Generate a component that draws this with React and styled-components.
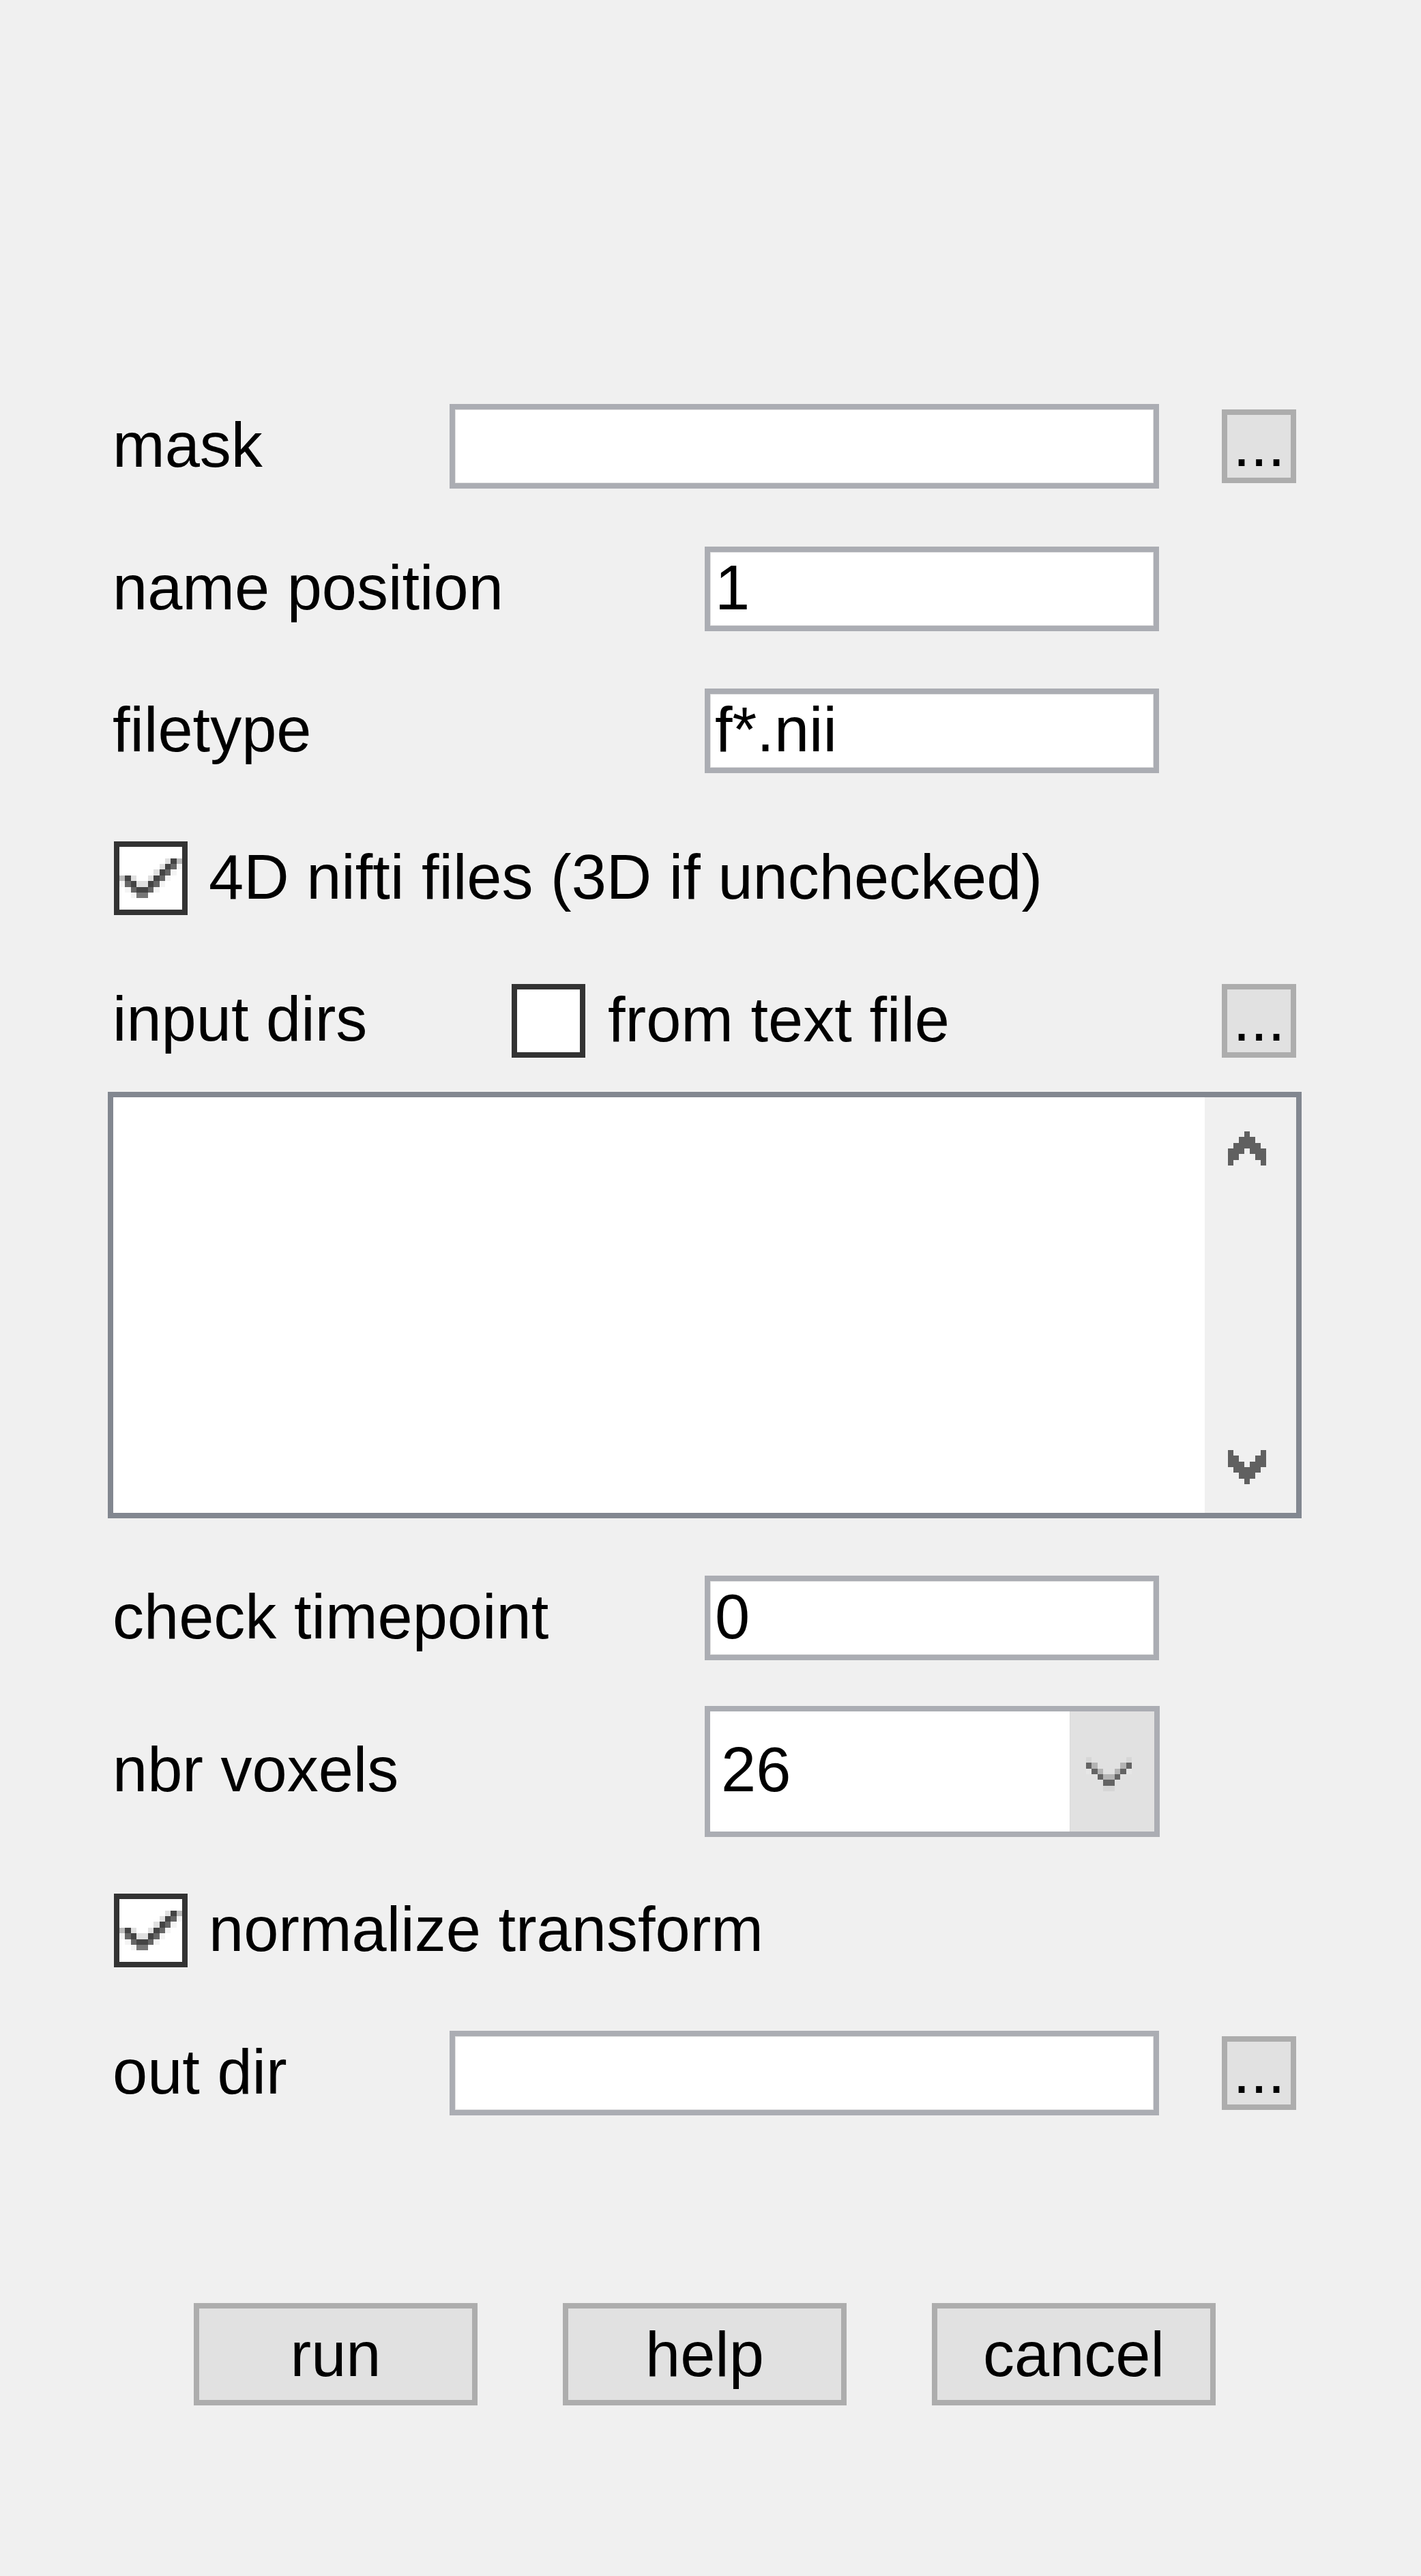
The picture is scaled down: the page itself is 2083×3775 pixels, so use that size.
import React from 'react';
import styled, { createGlobalStyle } from 'styled-components';

const Global = createGlobalStyle`
  html, body {
    margin: 0;
    padding: 0;
    background: #f0f0f0;
  }
  body {
    font-family: "Liberation Sans", Arial, sans-serif;
  }
`;

const Page = styled.div`
  width: 2083px;
  min-height: 3775px;
  box-sizing: border-box;
  padding: 592px 0 0 165px;
  background: #f0f0f0;
  font-family: "Liberation Sans", Arial, sans-serif;
  font-size: 92px;
  line-height: 92px;
  color: #000;
`;

const Form = styled.div`
  width: 1735px;
  display: flex;
  flex-direction: column;
`;

const Row = styled.div`
  display: flex;
  align-items: flex-start;
  margin-top: ${(p) => p.$top || 0}px;
  margin-left: ${(p) => p.$left || 0}px;
  gap: ${(p) => p.$gap || 0}px;
`;

const Label = styled.div`
  flex: none;
  width: ${(p) => (p.$w ? `${p.$w}px` : 'auto')};
  margin-top: ${(p) => p.$offset ?? 14}px;
  margin-left: ${(p) => p.$left || 0}px;
  white-space: nowrap;
`;

const Field = styled.div`
  flex: none;
  box-sizing: border-box;
  width: ${(p) => p.$w}px;
  height: 124px;
  border: 8px solid #abadb3;
  background: #fff;
  box-shadow: inset 0 0 0 1px #e3e3e3;
  padding: 6px 0 0 7px;
  white-space: nowrap;
  overflow: hidden;
`;

const BrowseButton = styled.div`
  flex: none;
  box-sizing: border-box;
  width: 109px;
  height: 108px;
  margin-top: ${(p) => p.$top ?? 8}px;
  margin-left: ${(p) => (p.$auto ? 'auto' : '92px')};
  border: 8px solid #adadad;
  background: #e1e1e1;
  display: flex;
  justify-content: center;
  align-items: flex-start;
  line-height: 86px;
`;

const CheckBox = styled.div`
  flex: none;
  box-sizing: border-box;
  width: 108px;
  height: 108px;
  margin-left: ${(p) => p.$left || 0}px;
  border: 8px solid #333333;
  background: #fff;
  display: flex;
`;

const ListBox = styled.div`
  flex: none;
  box-sizing: border-box;
  width: 1750px;
  height: 625px;
  margin-left: -7px;
  border: 8px solid #828790;
  background: #fff;
  display: flex;
`;

const ListArea = styled.div`
  flex: 1;
  background: #fff;
`;

const ScrollBar = styled.div`
  flex: none;
  width: 134px;
  box-sizing: border-box;
  background: #f0f0f0;
  display: flex;
  flex-direction: column;
  justify-content: space-between;
  align-items: flex-start;
  padding: 50px 0 42px 34px;
`;

const Combo = styled.div`
  flex: none;
  box-sizing: border-box;
  width: 667px;
  height: 192px;
  border: 8px solid #abadb3;
  background: #fff;
  display: flex;
`;

const ComboText = styled.div`
  flex: 1;
  padding: 39px 0 0 16px;
`;

const ComboButton = styled.div`
  flex: none;
  width: 124px;
  box-sizing: border-box;
  background: #e1e1e1;
  border-left: 1px solid #d9d9d9;
  padding: 67px 0 0 23px;
`;

const ActionButton = styled.div`
  flex: none;
  box-sizing: border-box;
  width: 416px;
  height: 150px;
  border: 8px solid #adadad;
  background: #e1e1e1;
  display: flex;
  align-items: center;
  justify-content: center;
`;

const PixelSvg = styled.svg`
  display: block;
  shape-rendering: crispEdges;
`;

const CHECK = [
  [8, 2, '#e0e0e0'], [9, 2, '#444'], [10, 2, '#bbb'],
  [7, 3, '#e0e0e0'], [8, 3, '#444'], [9, 3, '#666'], [10, 3, '#f4f4f4'],
  [6, 4, '#e0e0e0'], [7, 4, '#444'], [8, 4, '#666'], [9, 4, '#f4f4f4'],
  [0, 5, '#bbb'], [1, 5, '#444'], [2, 5, '#e0e0e0'], [5, 5, '#e0e0e0'], [6, 5, '#444'], [7, 5, '#666'], [8, 5, '#f4f4f4'],
  [0, 6, '#f4f4f4'], [1, 6, '#666'], [2, 6, '#444'], [3, 6, '#e0e0e0'], [4, 6, '#e0e0e0'], [5, 6, '#444'], [6, 6, '#666'], [7, 6, '#f4f4f4'],
  [1, 7, '#f4f4f4'], [2, 7, '#666'], [3, 7, '#444'], [4, 7, '#444'], [5, 7, '#666'], [6, 7, '#f4f4f4'],
  [2, 8, '#f4f4f4'], [3, 8, '#777'], [4, 8, '#777'],
];

const UP = [[3], [2, 3, 4], [1, 2, 3, 4, 5], [0, 1, 2, 4, 5, 6], [0, 1, 5, 6], [0, 6]];
const DOWN = [...UP].reverse();

const CHEVRON = [
  [0, 0, '#d6d6d6'], [7, 0, '#d6d6d6'],
  [0, 1, '#646464'], [1, 1, '#b4b4b4'], [6, 1, '#b4b4b4'], [7, 1, '#646464'],
  [0, 2, '#e6e6e6'], [1, 2, '#646464'], [2, 2, '#b4b4b4'], [5, 2, '#b4b4b4'], [6, 2, '#646464'], [7, 2, '#e6e6e6'],
  [2, 3, '#646464'], [3, 3, '#b4b4b4'], [4, 3, '#b4b4b4'], [5, 3, '#646464'],
  [3, 4, '#646464'], [4, 4, '#646464'],
  [3, 5, '#d6d6d6'], [4, 5, '#d6d6d6'],
];

function CheckMark() {
  return (
    <PixelSvg width="92" height="92" viewBox="0 0 11 11" preserveAspectRatio="none">
      {CHECK.map(([x, y, c]) => (
        <rect key={`${x}-${y}`} x={x} y={y} width="1" height="1" fill={c} />
      ))}
    </PixelSvg>
  );
}

function ScrollArrow({ rows }) {
  return (
    <PixelSvg width="56" height="50" viewBox="0 0 7 6" preserveAspectRatio="none">
      {rows.map((cols, y) =>
        cols.map((x) => <rect key={`${x}-${y}`} x={x} y={y} width="1" height="1" fill="#606060" />)
      )}
    </PixelSvg>
  );
}

function Chevron() {
  return (
    <PixelSvg width="67" height="50" viewBox="0 0 8 6" preserveAspectRatio="none">
      {CHEVRON.map(([x, y, c]) => (
        <rect key={`${x}-${y}`} x={x} y={y} width="1" height="1" fill={c} />
      ))}
    </PixelSvg>
  );
}

export default function App() {
  return (
    <>
      <Global />
      <Page>
        <Form>
          <Row>
            <Label $w={494}>mask</Label>
            <Field $w={1040} />
            <BrowseButton>...</BrowseButton>
          </Row>

          <Row $top={85}>
            <Label $w={868}>name position</Label>
            <Field $w={666}>1</Field>
          </Row>

          <Row $top={84}>
            <Label $w={868}>filetype</Label>
            <Field $w={666}>f*.nii</Field>
          </Row>

          <Row $top={100}>
            <CheckBox $left={2}>
              <CheckMark />
            </CheckBox>
            <Label $offset={6} $left={31}>4D nifti files (3D if unchecked)</Label>
          </Row>

          <Row $top={101}>
            <Label $w={585} $offset={5}>input dirs</Label>
            <CheckBox />
            <Label $offset={6} $left={33}>from text file</Label>
            <BrowseButton $auto $top={0}>...</BrowseButton>
          </Row>

          <Row $top={50}>
            <ListBox>
              <ListArea />
              <ScrollBar>
                <ScrollArrow rows={UP} />
                <ScrollArrow rows={DOWN} />
              </ScrollBar>
            </ListBox>
          </Row>

          <Row $top={84}>
            <Label $w={868}>check timepoint</Label>
            <Field $w={666}>0</Field>
          </Row>

          <Row $top={67}>
            <Label $w={868} $offset={47}>nbr voxels</Label>
            <Combo>
              <ComboText>26</ComboText>
              <ComboButton>
                <Chevron />
              </ComboButton>
            </Combo>
          </Row>

          <Row $top={83}>
            <CheckBox $left={2}>
              <CheckMark />
            </CheckBox>
            <Label $offset={6} $left={31}>normalize transform</Label>
          </Row>

          <Row $top={93}>
            <Label $w={494}>out dir</Label>
            <Field $w={1040} />
            <BrowseButton>...</BrowseButton>
          </Row>

          <Row $top={275} $left={119} $gap={125}>
            <ActionButton>run</ActionButton>
            <ActionButton>help</ActionButton>
            <ActionButton>cancel</ActionButton>
          </Row>
        </Form>
      </Page>
    </>
  );
}
